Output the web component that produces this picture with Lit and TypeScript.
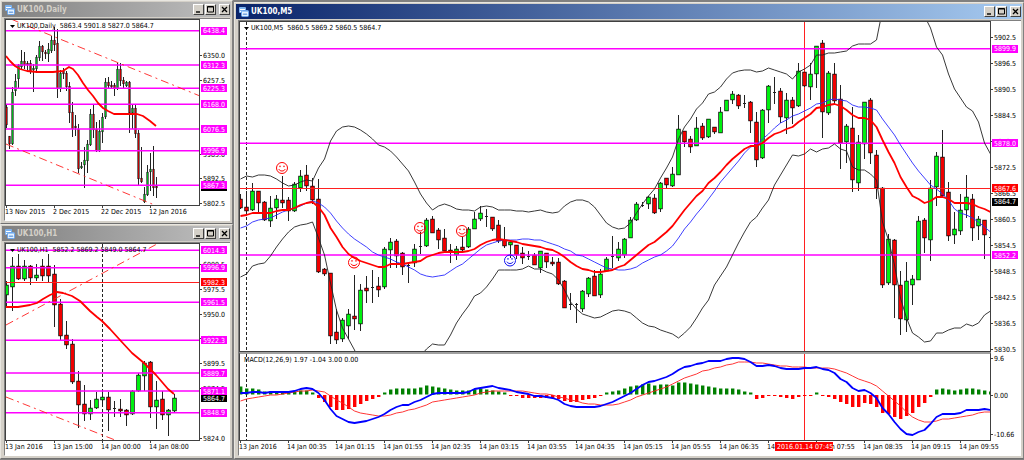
import { LitElement, html, svg, css, nothing } from "lit";
import { customElement, property } from "lit/decorators.js";
import { classMap } from "lit/directives/class-map.js";

/** direction (g = up, r = down), high, body top, body bottom, low */
type Candle = [string, number, number, number, number];
type Point = [number, number];
interface Curve { kind: string; points: Point[] }
interface Level { y: number; kind: string }
interface Tag { y: number; text: string; kind: string }
interface Panel {
  name: string;
  left: number;
  top: number;
  height: number;
  step: number;
  bodyWidth: number;
  candles: Candle[];
  curves: Curve[];
  levels: Level[];
  verticals: { x: number; kind: string }[];
  prices: [number, string][];
  tags: Tag[];
  smileys: { x: number; y: number; kind: string }[];
  bars: number[];
}
interface Chart {
  title: string;
  symbol: string;
  quotes: string;
  panels: Panel[];
  times: [number, string][];
  timeTag?: { x: number; width: number; text: string };
}

const candles = (text: string): Candle[] =>
  text.trim().split(/\s+/).map((item) => {
    const [high, top, bottom, low] = item.slice(1).split(",").map(Number);
    return [item[0], high, top, bottom, low];
  });

const points = (text: string): Point[] =>
  text.trim().split(/\s+/).map((p) => p.split(",").map(Number) as Point);

/** One value per bar, starting at the first bar of the chart. */
const series = (x0: number, step: number, text: string): Point[] =>
  text.trim().split(/\s+/).map((v, i) => [x0 + i * step, Number(v)] as Point);

const magenta = (...ys: number[]): Level[] => ys.map((y) => ({ y, kind: "magenta" }));

const m5 = (text: string) => series(240.5, 6, text);

const daily: Chart = {
  title: "UK100,Daily",
  symbol: "UK100,Daily",
  quotes: "5863.4 5901.8 5827.0 5864.7",
  panels: [{
    name: "Daily candles",
    left: 6, top: 20, height: 185, step: 3, bodyWidth: 1,
    candles: candles(`
      r105,107,124,127 r136,136,143,148 g87,92,143,144 g74,81,90,95 g64,65,78,88 g50,61,66,69
      r52,61,64,68 r61,63,64,69 r60,63,71,73 g64,68,69,91 g55,57,68,72 g41,46,57,60 r45,46,51,60
      r50,52,53,58 g43,49,53,61 g36,40,50,52 r27,40,44,50 r29,43,88,97 g70,73,88,91 r68,71,73,78
      r71,73,86,90 r82,86,112,122 r102,112,128,136 r115,126,127,135 r124,129,168,172
      g162,166,167,168 g147,160,164,187 g140,144,160,172 g109,114,144,145 r105,114,129,137
      r122,129,150,151 g120,131,150,151 g113,117,131,142 g78,82,116,118 r77,82,85,87
      r81,85,86,88 r83,85,88,95 g63,69,88,89 r63,69,80,85 r77,80,83,87 g81,82,85,86
      r81,82,112,132 g104,108,112,128 r105,108,133,137 r130,133,178,185 r147,178,181,182
      g187,194,201,202 g165,172,194,195 g153,169,171,190 r146,169,187,195 r177,186,187,197`),
    curves: [
      { kind: "red-dash", points: points("11,19 18,22 200,96") },
      { kind: "red-dash", points: points("6,144 157,206") },
      { kind: "red-ma", points: points("6,56 10,61 15,66 20,69 27,71 37,72 53,72 63,71 69,67 73,69 78,75 83,83 88,90 93,96 98,103 103,108 108,111 114,114 137,114 143,116 150,121 156,126") },
    ],
    levels: magenta(30.7, 65, 88.3, 104.3, 129, 150.7, 185.3),
    verticals: [],
    prices: [[55, "6350.0"], [80, "6257.5"], [154, "5985.0"], [178.7, "5892.5"], [203.7, "5802.5"]],
    tags: [
      { y: 186.7, text: "5864.7", kind: "black" },
      { y: 30.7, text: "6438.4", kind: "magenta" },
      { y: 65, text: "6312.3", kind: "magenta" },
      { y: 88.3, text: "6225.3", kind: "magenta" },
      { y: 104.3, text: "6168.0", kind: "magenta" },
      { y: 129, text: "6076.5", kind: "magenta" },
      { y: 150.7, text: "5996.9", kind: "magenta" },
      { y: 185.3, text: "5867.3", kind: "magenta" },
    ],
    smileys: [], bars: [],
  }],
  times: [[6, "13 Nov 2015"], [54, "2 Dec 2015"], [102, "22 Dec 2015"], [150, "12 Jan 2016"]],
};

const hourly: Chart = {
  title: "UK100,H1",
  symbol: "UK100,H1",
  quotes: "5852.2 5869.2 5849.0 5864.7",
  panels: [{
    name: "Hourly candles",
    left: 6, top: 244, height: 196, step: 6, bodyWidth: 3,
    candles: candles(`
      g281,285,294,305 g257,266,286,310 r254,266,278,279 g260,266,278,280 r265,266,277,284
      g264,275,277,280 r259,266,275,280 r254,266,275,281 r265,274,304,326 r299,304,335,339
      r321,335,344,348 r339,344,381,383 r371,381,404,427 r385,404,413,420 g400,408,413,419
      g392,399,407,408 g389,397,399,404 r392,397,409,430 r401,408,408,416 r399,409,410,416
      r409,410,414,425 g390,391,413,414 g373,375,390,391 g361,363,375,390 r361,362,406,417
      g381,400,406,428 r391,399,414,419 g409,410,414,435 g394,398,410,412`),
    curves: [
      { kind: "red-dash", points: points("6,325 157,244") },
      { kind: "red-dash", points: points("6,397 115,440") },
      { kind: "red-ma", points: points("6,307 18,307 30,305 37,303 43,299 50,295 57,292 63,293 72,296 80,301 84,305 90,311 97,317 102,321 110,329 120,340 132,353 144,363 150,369 156,375 162,382 168,389 174,394") },
    ],
    levels: [...magenta(250.3, 267.7, 302.3, 340.3, 373, 391, 412.7), { y: 282.5, kind: "red" }],
    verticals: [{ x: 102.5, kind: "dashed" }],
    prices: [[264, "6000.5"], [289.3, "5975.5"], [314, "5950.0"], [338.7, "5924.5"], [363, "5899.5"], [388, "5874.5"], [438, "5824.0"]],
    tags: [
      { y: 250.3, text: "6014.3", kind: "magenta" },
      { y: 267.7, text: "5996.9", kind: "magenta" },
      { y: 282.3, text: "5982.3", kind: "red" },
      { y: 302.3, text: "5961.5", kind: "magenta" },
      { y: 340.3, text: "5922.3", kind: "magenta" },
      { y: 373, text: "5889.7", kind: "magenta" },
      { y: 398.3, text: "5864.7", kind: "black" },
      { y: 391, text: "5871.1", kind: "magenta" },
      { y: 412.7, text: "5848.9", kind: "magenta" },
    ],
    smileys: [], bars: [],
  }],
  times: [[6, "13 Jan 2016"], [54, "13 Jan 15:00"], [102, "14 Jan 00:00"], [150, "14 Jan 08:00"]],
};

const fiveMinutes: Chart = {
  title: "UK100,M5",
  symbol: "UK100,M5",
  quotes: "5860.5 5869.2 5860.5 5864.7",
  panels: [
    {
      name: "Five minute candles",
      left: 240, top: 22, height: 329, step: 6, bodyWidth: 3,
      candles: candles(`
        r194,199,207,208 r191,207,210,211 g183,191,209,210 r191,191,202,211 r201,202,219,220
        g196,208,220,226 g195,199,207,218 r176,200,202,207 r197,200,210,220 g182,184,210,211
        g170,176,187,191 r165,175,185,190 r178,186,199,203 r179,199,271,272 r268,269,273,275
        r273,273,335,343 r309,332,339,343 g318,320,338,341 g309,314,325,338 r275,316,318,329
        g284,290,323,330 r276,288,290,302 r270,287,287,302 r277,286,289,296 g247,249,286,288
        g238,242,249,267 r239,241,255,267 r252,253,266,274 r262,265,265,282 g244,249,262,266
        r232,246,246,253 g218,220,245,246 r216,219,232,232 r228,230,239,248 r229,238,250,252
        r244,250,251,262 g246,249,254,259 r237,247,249,252 g227,229,246,247 g212,219,228,228
        g206,213,218,220 r209,216,216,226 r217,217,228,230 r220,225,240,242 r227,240,245,247
        g240,242,244,257 r245,245,254,258 r247,253,257,263 r251,256,256,259 r253,255,264,264
        g251,251,267,272 r253,253,261,267 r257,262,263,265 r258,262,283,284 r280,281,307,307
        r293,304,304,309 r303,304,304,322 g290,291,308,311 g277,278,293,296 r270,276,295,295
        g269,274,294,297 g257,259,270,271 r236,256,256,267 g242,249,257,260 g238,239,254,257
        g217,220,237,237 g202,204,219,220 r202,205,205,206 g196,197,203,208 r194,198,212,213
        g182,183,208,211 r178,178,184,187 g167,174,185,186 g115,129,174,174 r131,131,141,146
        r136,139,146,152 g117,128,145,145 r123,126,137,139 g119,119,136,137 r127,127,131,133
        g107,112,132,132 g100,100,110,110 g91,94,99,103 r94,95,105,108 r95,103,103,107
        r101,102,120,132 r112,122,159,166 g109,110,157,158 g85,86,109,122 r77,92,92,103
        r88,91,116,122 g93,100,117,133 r97,100,107,123 g63,71,105,106 r72,72,85,86
        g63,74,86,99 g46,46,73,87 r40,43,111,137 g71,73,112,114 r63,74,100,103
        r85,99,142,168 g124,126,141,162 r107,128,179,191 g135,142,182,190 g102,102,143,158
        r98,100,152,163 r150,155,187,198 r187,188,284,287 g234,239,282,284 r239,240,284,317
        r271,285,318,334 g262,281,319,331 g275,279,284,304 g216,221,279,279 r218,220,237,252
        g180,188,239,260 g152,156,186,205 r130,157,195,196 r182,192,235,240 g212,229,234,243
        g194,210,230,234 g175,197,209,217 r194,199,227,240 g216,219,225,239 r220,220,234,258
        r231,237,237,252`),
      curves: [
        { kind: "band", points: m5(`
          179 176 177 175 175 176 179 183 186 185 182 180 181 168 159 141 131 127 126 127 130 134 139 145
          147 151 157 164 171 182 194 203 210 206 204 206 209 210 210 211 207 206 207 210 210 210 211 211
          212 211 210 212 213 212 206 202 200 200 202 207 215 223 227 229 228 223 213 204 196 189 178 168
          157 139 127 119 109 103 94 92 87 79 73 71 70 70 72 71 68 70 72 74 79 72 69 65 55 55 53 53 52 51
          46 44 44 44 40 10 -50 -50 -50 -50 -50 -50 16 28 47 55 74 89 98 107 111 122 143 154`) },
        { kind: "band", points: m5(`
          277 274 266 264 263 256 247 239 232 227 225 224 222 238 255 283 310 328 339 350 365 375 380 380
          380 380 380 378 374 366 356 349 344 345 345 335 323 314 306 296 293 287 279 270 270 270 270 269
          266 269 269 272 274 280 290 302 309 314 316 318 317 314 311 310 311 313 318 323 326 327 330 332
          334 338 333 327 318 308 300 285 276 267 255 243 232 222 217 208 200 185 175 165 155 156 154 149
          152 149 148 144 149 151 167 170 170 174 180 222 240 265 298 318 333 337 342 341 333 333 330 328
          328 324 326 323 315 311`) },
        { kind: "blue-ma", points: m5(`
          228 226 222 220 219 218 215 212 210 208 206 203 201 203 207 213 221 228 234 239 243 247 252 255
          257 259 262 264 267 270 274 276 277 276 275 271 267 264 259 254 249 245 243 241 240 240 240 239
          239 240 240 242 244 246 249 251 255 256 259 262 265 268 269 270 270 269 267 263 260 257 255 251
          246 238 229 222 214 207 199 191 182 175 168 161 153 147 145 139 134 128 123 120 116 114 111 108
          104 103 100 99 100 101 105 107 107 108 110 119 127 135 145 154 163 171 178 185 189 194 200 209
          213 215 218 222 227 232`) },
        { kind: "red-ma", points: m5(`
          216 215 213 213 213 213 211 210 210 208 205 203 202 207 215 228 237 247 254 258 261 263 265 267
          267 264 264 264 263 262 261 257 255 253 252 252 252 252 251 249 245 242 240 239 240 241 242 244
          245 246 247 249 250 253 257 262 266 269 270 272 272 271 270 267 265 260 255 250 245 242 237 232
          226 218 210 203 196 191 183 178 172 165 159 154 149 146 146 143 138 134 132 129 127 122 118 114
          108 107 105 104 106 110 115 118 118 120 127 140 152 163 177 187 196 199 203 201 197 197 199 203
          203 203 204 207 209 212`) },
      ],
      levels: [...magenta(48.7, 143.3, 255), { y: 188.5, kind: "red" }],
      verticals: [{ x: 246.5, kind: "dashed" }, { x: 804.5, kind: "cursor" }],
      prices: [[37.7, "5902.5"], [63.3, "5896.5"], [89.3, "5890.5"], [115.3, "5884.5"], [141.3, "5878.5"], [167.3, "5872.5"], [193.5, "5866.5"], [219.5, "5860.5"], [245, "5854.5"], [271.3, "5848.5"], [297, "5842.5"], [323, "5836.5"], [349, "5830.5"]],
      tags: [
        { y: 48.7, text: "5899.9", kind: "magenta" },
        { y: 143.3, text: "5878.0", kind: "magenta" },
        { y: 188.3, text: "5867.6", kind: "red" },
        { y: 201.7, text: "5864.7", kind: "black" },
        { y: 255, text: "5852.2", kind: "magenta" },
      ],
      smileys: [
        { x: 282, y: 168, kind: "sell" },
        { x: 354, y: 262.5, kind: "sell" },
        { x: 420, y: 228, kind: "sell" },
        { x: 462, y: 231, kind: "sell" },
        { x: 510, y: 260.5, kind: "buy" },
      ],
      bars: [],
    },
    {
      name: "MACD",
      left: 240, top: 354, height: 86, step: 6, bodyWidth: 4,
      candles: [],
      bars: [
        387, 389, 389, 390, 392, 392, 392, 392, 393, 392, 391, 391, 393, 398, 402, 407, 410, 410, 409, 407, 404,
        401, 399, 397, 393, 390, 389, 389, 389, 389, 388, 386, 387, 388, 389, 390, 391, 391, 391, 390, 389, 390,
        391, 392, 393, 396, 396, 398, 398, 398, 398, 398, 398, 399, 401, 402, 402, 400, 399, 398, 396, 393, 392,
        391, 389, 387, 386, 385, 384, 386, 385, 385, 386, 383, 383, 384, 385, 386, 387, 388, 389, 389, 389, 390,
        392, 393, 399, 398, 396, 396, 397, 398, 399, 397, 396, 396, 393, 396, 397, 399, 402, 404, 407, 407, 403,
        404, 407, 413, 414, 417, 419, 416, 413, 407, 403, 397, 390, 389, 390, 391, 390, 389, 389, 390, 391, 392,
      ],
      curves: [
        { kind: "signal", points: m5(`
          401 399 398 397 396 395 395 394 393 392 391 391 390 391 392 396 400 403 407 411 413 414 415 416
          416 415 413 412 410 409 407 405 402 401 400 399 398 397 396 395 393 392 391 391 391 391 391 391
          392 393 394 394 395 397 398 400 401 403 404 404 405 405 405 404 402 400 397 395 393 391 389 387
          384 381 378 376 374 371 370 368 367 365 364 362 362 362 363 363 364 365 366 366 367 367 367 368
          368 368 368 369 371 373 376 379 381 383 386 391 396 401 406 412 417 420 422 422 421 419 419 418
          417 416 415 413 412 412`) },
        { kind: "macd", points: m5(`
          393 393 392 392 393 392 392 392 392 391 389 388 389 393 400 409 416 419 422 423 422 421 419 417
          414 410 407 405 405 402 400 397 394 393 393 393 393 393 392 389 388 387 386 388 389 390 392 393
          394 396 396 397 398 400 404 406 407 407 407 407 406 404 402 399 396 393 389 385 382 381 379 377
          374 370 367 366 364 363 361 361 361 359 358 358 359 362 366 366 365 366 368 369 369 369 368 368
          367 369 370 373 379 382 388 391 390 393 398 408 414 422 429 434 435 432 430 424 417 414 414 414
          413 410 410 410 409 410`) },
      ],
      levels: [],
      verticals: [{ x: 246.5, kind: "dashed" }, { x: 804.5, kind: "cursor" }],
      prices: [[358.7, "9.6"], [395, "0.00"], [434.7, "-10.66"]],
      tags: [],
      smileys: [],
    },
  ],
  times: [
    [240, "13 Jan 2016"], [288, "14 Jan 00:35"], [336, "14 Jan 01:15"], [384, "14 Jan 01:55"],
    [432, "14 Jan 02:35"], [480, "14 Jan 03:15"], [528, "14 Jan 03:55"], [576, "14 Jan 04:35"],
    [624, "14 Jan 05:15"], [672, "14 Jan 05:55"], [720, "14 Jan 06:35"], [768, "14 Jan 07:15"],
    [816, "14 Jan 07:55"], [864, "14 Jan 08:35"], [912, "14 Jan 09:15"], [960, "14 Jan 09:55"],
  ],
  timeTag: { x: 775, width: 58, text: "2016.01.14 07:45" },
};

const MACD_ZERO = 394.5;

@customElement("price-chart")
class PriceChart extends LitElement {
  @property({ attribute: false }) chart!: Chart;

  static styles = css`
    :host { display: block; background: #fff; }
    svg { display: block; overflow: hidden; }
    .panel { display: grid; grid-template-columns: 1fr 30px; }
    .plot { border: 1px solid #404040; position: relative; }
    .panel + .panel .plot { border-top: 2px solid #a0a0a0; }
    .plot svg { width: 100%; }
    .scale { width: 100%; overflow: visible; margin-top: 1px; }
    .panel + .panel .scale { margin-top: 2px; }
    .times { width: 100%; height: 14px; overflow: visible; }
    .caption {
      position: absolute; top: 1px; left: 4px; display: flex; gap: 4px;
      align-items: center; height: 10px; margin: 0;
    }
    .caption .arrow { width: 5px; height: 3px; margin-right: -2px; }
    text, .caption { font: 7px "DejaVu Sans Condensed", "DejaVu Sans", sans-serif; fill: #000; color: #000; white-space: pre; }
    .wick { fill: #222; }
    .body { stroke: #000; stroke-width: 1.4; paint-order: stroke; }
    .g { fill: #00f010; }
    .r { fill: #f00000; }
    .thin { stroke-width: 1.1; }
    .thin.g { fill: #00b41c; }
    .thin.r { fill: #c00000; }
    .flat { fill: #222; }
    .curve { fill: none; stroke-linejoin: round; }
    .band { stroke: #222; stroke-width: 0.9; }
    .red-ma { stroke: #f00; stroke-width: 1.8; }
    .blue-ma { stroke: #2a2aff; stroke-width: 0.9; }
    .macd { stroke: #00f; stroke-width: 1.8; }
    .signal { stroke: #ff2020; stroke-width: 0.9; }
    .red-dash { stroke: #ff2020; stroke-width: 0.9; stroke-dasharray: 8 4 2 4; }
    .level { stroke-width: 1.6; }
    .level.magenta { stroke: #f0f; }
    .level.red { stroke: #ff2020; stroke-width: 1; }
    .dashed { stroke: #222; stroke-width: 1; stroke-dasharray: 3 2; }
    .cursor { stroke: #ff2020; stroke-width: 1; }
    .up { fill: #008000; }
    .down { fill: #f00; }
    .tick { stroke: #404040; stroke-width: 1; }
    .box.magenta { fill: #f0f; }
    .box.red { fill: #f00; }
    .box.black { fill: #000; }
    .inverse { fill: #fff; }
    .smiley { fill: none; stroke: #f00; stroke-width: 1; }
    .smiley.buy { stroke: #1010f0; }
    .smiley .eye { stroke-width: 1.4; stroke-linecap: round; }
  `;

  private candle(c: Candle, i: number, p: Panel) {
    const [dir, high, top, bottom, low] = c;
    const x = p.left + i * p.step;
    const w = p.bodyWidth;
    const left = x - (w - 1) / 2;
    const flat = bottom - top < 1;
    return svg`
      <rect class="wick" x=${x} y=${high} width="1" height=${low - high + 1}></rect>
      ${flat
        ? svg`<rect class="flat" x=${left} y=${top} width=${w} height="1"></rect>`
        : svg`<rect class=${`body ${dir} ${w < 3 ? "thin" : ""}`} x=${left} y=${top + 0.5}
            width=${w} height=${bottom - top}></rect>`}`;
  }

  private bar(y: number, i: number, p: Panel) {
    const up = y < MACD_ZERO;
    return svg`<rect class=${up ? "up" : "down"} x=${p.left + i * p.step - 1}
      y=${up ? y - 0.5 : MACD_ZERO + 0.5} width="3.4" height=${up ? MACD_ZERO - y + 0.5 : y - MACD_ZERO - 0.5}></rect>`;
  }

  private smiley(s: { x: number; y: number; kind: string }) {
    return svg`<g class="smiley ${s.kind}" transform="translate(${s.x} ${s.y})">
      <circle r="5.5"></circle>
      <path class="eye" d="M-2 -1.8v.4M2 -1.8v.4"></path>
      <path d="M-3.2 1.2C-2 3.6 2 3.6 3.2 1.2"></path>
    </g>`;
  }

  private plot(p: Panel) {
    return html`<svg role="img" aria-label=${p.name} height=${p.height}>
      <g transform="translate(${-p.left} ${-p.top})">
        ${p.verticals.map((v) => svg`<line class=${v.kind} x1=${v.x} x2=${v.x} y1=${p.top} y2=${p.top + p.height}></line>`)}
        ${p.candles.map((c, i) => this.candle(c, i, p))}
        ${p.bars.map((y, i) => this.bar(y, i, p))}
        ${p.levels.map((l) => svg`<line class="level ${l.kind}" x1=${p.left} x2="4000" y1=${l.y} y2=${l.y}></line>`)}
        ${p.curves.map((c) => svg`<polyline class="curve ${c.kind}" points=${c.points.map((q) => q.join(",")).join(" ")}></polyline>`)}
        ${p.smileys.map((s) => this.smiley(s))}
      </g>
    </svg>`;
  }

  private scale(p: Panel) {
    return html`<svg class="scale" height=${p.height}>
      <g transform="translate(0 ${-p.top})">
        ${p.prices.map(([y, label]) => svg`
          <line class="tick" x1="0" x2="2" y1=${Math.floor(y) + 0.5} y2=${Math.floor(y) + 0.5}></line>
          <text x="3" y=${Math.round(y + 2.6)}>${label}</text>`)}
        ${p.tags.map((t) => svg`
          <rect class="box ${t.kind}" x="1" y=${Math.round(t.y - 4)} width="26" height="8"></rect>
          <text class="inverse" x="3" y=${Math.round(t.y + 2.6)}>${t.text}</text>`)}
      </g>
    </svg>`;
  }

  render() {
    const c = this.chart;
    const left = c.panels[0].left;
    return html`
      ${c.panels.map((p, i) => html`
        <div class="panel">
          <div class="plot">
            ${this.plot(p)}
            ${i === 0
              ? html`<p class="caption">
                  <svg class="arrow" viewBox="0 0 5 3" aria-hidden="true"><path d="M0 0h5L2.500 3z"></path></svg>
                  <span>${c.symbol}</span><span>${c.quotes}</span></p>`
              : html`<p class="caption">MACD(12,26,9) 1.97 -1.04 3.00 0.00</p>`}
          </div>
          ${this.scale(p)}
        </div>`)}
      <svg class="times">
        <g transform="translate(${1 - left} 0)">
          ${c.times.map(([x, label]) => svg`
            <line class="tick" x1=${x + 0.5} x2=${x + 0.5} y1="-1" y2="2"></line>
            <text x=${x - 1} y="8">${label}</text>`)}
          ${c.timeTag ? svg`
            <rect class="box red" x=${c.timeTag.x} y="1" width=${c.timeTag.width} height="9"></rect>
            <text class="inverse" x=${c.timeTag.x + 2} y="8">${c.timeTag.text}</text>` : nothing}
        </g>
      </svg>`;
  }
}

@customElement("chart-window")
class ChartWindow extends LitElement {
  @property({ attribute: false }) chart!: Chart;
  @property({ type: Boolean }) active = false;

  static styles = css`
    :host {
      display: block; box-sizing: border-box; padding: 1px; background: #d4d0c8;
      border: 1px solid; border-color: #e8e6e0 #808080 #707070 #e8e6e0;
    }
    header {
      display: flex; align-items: center; height: 15px; padding: 0 1px 0 3px;
      background: linear-gradient(90deg, #808080, #c0c0c0); color: #d4d0c8;
    }
    header.active { background: linear-gradient(90deg, #0a246a, #a6caf0); color: #fff; }
    .logo { width: 10px; height: 10px; margin-right: 2px; }
    h2 { flex: 1; margin: 0; font: bold 8px "DejaVu Sans Condensed", "DejaVu Sans", sans-serif; }
    button {
      width: 11px; height: 11px; padding: 0; display: grid; place-items: center;
      background: #d4d0c8; border: 1px solid; border-color: #fff #404040 #404040 #fff;
    }
    button + button { margin-left: 1px; }
    button:last-child { margin-left: 3px; }
    button svg { width: 9px; height: 9px; display: block; fill: none; stroke: #000; }
    main { display: block; margin: 1px 1px 1px 2px; border: 1px solid; border-color: #808080 #fff #fff #808080; border-right: 0; }
  `;

  render() {
    return html`
      <header class=${classMap({ active: this.active })}>
        <svg class="logo" viewBox="0 0 10 10" aria-hidden="true">
          <rect x="0" y="0" width="7" height="6" rx="1" fill="#7db4f0"></rect>
          <path d="M1 2.500h5M1 4.500h2" stroke="#fff"></path>
          <rect x="2.500" y="3.500" width="7" height="6" rx="1" fill="#e4f2ff" stroke="#6aa4ec"></rect>
          <path d="M3 4.500h6" stroke="#9cc8f6"></path>
          <path d="M4 8l1-1.500 1 1.500 1-1.500 1 1.500" fill="none" stroke="#3878d0" stroke-width=".7"></path>
        </svg>
        <h2>${this.chart.title}</h2>
        <button type="button" aria-label="Minimize"><svg viewBox="0 0 9 9"><path d="M2 7h4" stroke-width="1.400"></path></svg></button>
        <button type="button" aria-label="Maximize"><svg viewBox="0 0 9 9"><path d="M1.500 1.500h6v5.500h-6zM1.500 2h6"></path></svg></button>
        <button type="button" aria-label="Close"><svg viewBox="0 0 9 9"><path d="M2 2l5 5M7 2l-5 5" stroke-width="1.300"></path></svg></button>
      </header>
      <main><price-chart .chart=${this.chart}></price-chart></main>`;
  }
}

@customElement("app-root")
class AppRoot extends LitElement {
  static styles = css`
    :host {
      display: grid; grid-template-columns: 233px 1fr; column-gap: 1px; align-items: start;
      box-sizing: border-box; min-height: 100vh; background: #808080; overflow: hidden;
    }
    .stack { display: grid; }
    .wide { margin-top: 2px; }
  `;

  render() {
    return html`
      <div class="stack">
        <chart-window .chart=${daily}></chart-window>
        <chart-window .chart=${hourly}></chart-window>
      </div>
      <chart-window class="wide" active .chart=${fiveMinutes}></chart-window>`;
  }
}
